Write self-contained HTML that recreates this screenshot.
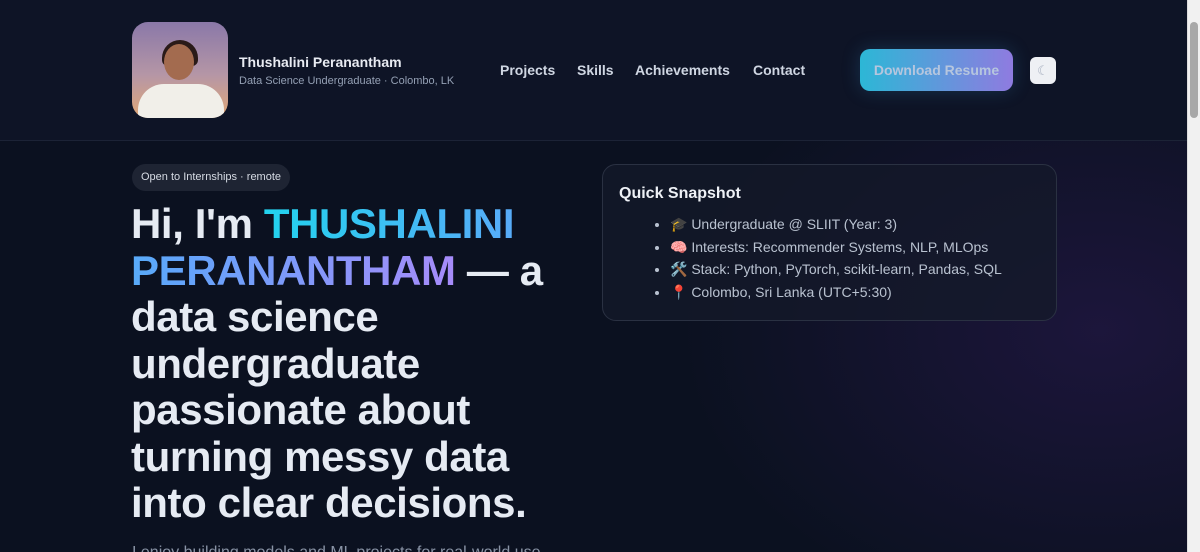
<!DOCTYPE html>
<html><head><style>
html,body{margin:0;padding:0;width:1200px;height:552px;overflow:hidden}
body{background:#0b1120;font-family:"Liberation Sans",sans-serif;position:relative}
.bg{position:absolute;left:0;top:0;width:1187px;height:552px;background:radial-gradient(ellipse 420px 300px at 1100px 330px,rgba(60,30,110,.35),transparent),#0b1120;overflow:hidden}
.header{position:absolute;left:0;top:0;width:1187px;height:140px;background:#0e1426;border-bottom:1px solid #1c2336}
.avatar{position:absolute;left:132px;top:22px;width:96px;height:96px;border-radius:16px;background:linear-gradient(180deg,#8a78a8 0%,#b596a6 55%,#e0a878 100%);overflow:hidden}
.avatar .head{position:absolute;left:32px;top:22px;width:30px;height:36px;border-radius:50%;background:#a36b4f}
.avatar .hair{position:absolute;left:30px;top:18px;width:36px;height:26px;border-radius:18px 18px 6px 6px;background:#2a1a18}
.avatar .body{position:absolute;left:6px;top:62px;width:86px;height:50px;border-radius:26px 26px 0 0;background:#f1efe9}
.name{position:absolute;left:239px;top:54px;color:#e8ebf2;font-weight:bold;font-size:14px}
.sub{position:absolute;left:239px;top:75px;color:#94a0b4;font-size:11px}
.nav{position:absolute;top:62px;color:#cfd6e2;font-weight:bold;font-size:14px}
.btn{position:absolute;left:860px;top:49px;width:153px;height:42px;border-radius:10px;background:linear-gradient(90deg,#2cb7d6,#8f7be0);color:#b6c6de;font-weight:bold;font-size:14px;text-align:center;line-height:42px;box-shadow:0 0 18px rgba(50,140,200,.25)}
.tog{position:absolute;left:1030px;top:57px;width:26px;height:27px;border-radius:6px;background:#eef0f4;color:#a8b0c0;font-size:13px;text-align:center;line-height:27px}
.pill{position:absolute;left:132px;top:164px;height:27px;padding:0 9px;border-radius:14px;background:#1e2433;color:#d6dbe4;font-size:11px;line-height:27px}
h1{position:absolute;left:131px;top:201px;margin:0;width:450px;font-size:42px;line-height:46.5px;font-weight:bold;color:#e6ebf3;letter-spacing:-0.4px}
.g{background:linear-gradient(90deg,#22d3ee 0%,#60a5fa 50%,#a78bfa 100%);-webkit-background-clip:text;background-clip:text;color:transparent}
.card{position:absolute;left:602px;top:164px;width:453px;height:155px;border:1px solid #2a3142;border-radius:14px;background:rgba(20,26,42,.75)}
.card h3{margin:0;position:absolute;left:16px;top:20px;font-size:16px;color:#eef1f6}
.card ul{position:absolute;left:50px;top:48px;margin:0;padding:0 0 0 17px;color:#b9c2d0;font-size:14px;line-height:22.7px}
.foot{position:absolute;left:132px;top:544px;color:#8a94a6;font-size:16px}
.sb{position:absolute;left:1187px;top:0;width:13px;height:552px;background:#f1f1f1;border-left:1px solid #ddd}
.sb div{position:absolute;left:2px;top:22px;width:8px;height:96px;background:#a8a8a8;border-radius:4px}
</style></head><body>
<div class="bg"></div>
<div class="header">
<div class="avatar"><div class="hair"></div><div class="head"></div><div class="body"></div></div>
<div class="name">Thushalini Peranantham</div>
<div class="sub">Data Science Undergraduate · Colombo, LK</div>
<div class="nav" style="left:500px">Projects</div>
<div class="nav" style="left:577px">Skills</div>
<div class="nav" style="left:635px">Achievements</div>
<div class="nav" style="left:753px">Contact</div>
<div class="btn">Download Resume</div>
<div class="tog">☾</div>
</div>
<div class="pill">Open to Internships · remote</div>
<h1>Hi, I'm <span class="g">THUSHALINI PERANANTHAM</span> — a data science undergraduate passionate about turning messy data into clear decisions.</h1>
<div class="card"><h3>Quick Snapshot</h3>
<ul><li>🎓 Undergraduate @ SLIIT (Year: 3)</li><li>🧠 Interests: Recommender Systems, NLP, MLOps</li><li>🛠️ Stack: Python, PyTorch, scikit-learn, Pandas, SQL</li><li>📍 Colombo, Sri Lanka (UTC+5:30)</li></ul></div>
<div class="foot">I enjoy building models and ML projects for real-world use</div>
<div class="sb"><div></div></div>
</body></html>
